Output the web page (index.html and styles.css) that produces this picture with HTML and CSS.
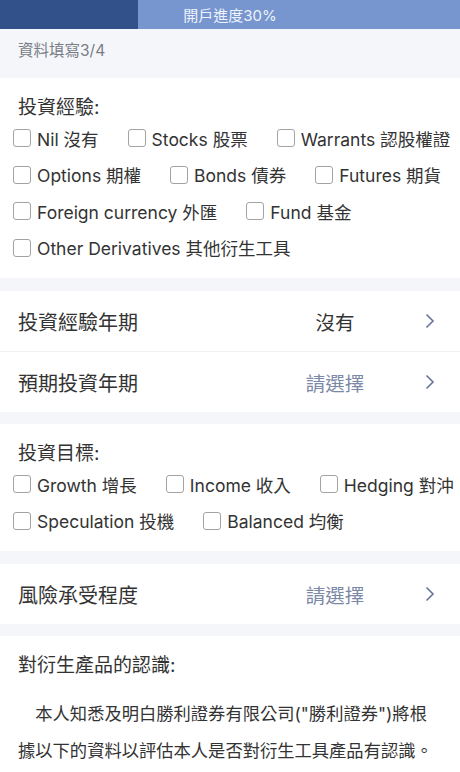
FILE: index.html
```html
<!DOCTYPE html>
<html lang="zh-Hant">
<head>
  <meta charset="UTF-8">
  <title>資料填寫</title>
  <link rel="stylesheet" href="styles.css">
</head>
<body>
  <div class="progress">
    <div class="progress-fill"></div>
    <span class="progress-text">開戶進度30%</span>
  </div>

  <div class="step">資料填寫3/4</div>

  <div class="section">
    <h3>投資經驗:</h3>
    <div class="check-row">
      <label class="check"><span class="box"></span>Nil 沒有</label>
      <label class="check"><span class="box"></span>Stocks 股票</label>
      <label class="check"><span class="box"></span>Warrants 認股權證</label>
    </div>
    <div class="check-row">
      <label class="check"><span class="box"></span>Options 期權</label>
      <label class="check"><span class="box"></span>Bonds 債券</label>
      <label class="check"><span class="box"></span>Futures 期貨</label>
    </div>
    <div class="check-row">
      <label class="check"><span class="box"></span>Foreign currency 外匯</label>
      <label class="check"><span class="box"></span>Fund 基金</label>
    </div>
    <div class="check-row">
      <label class="check"><span class="box"></span>Other Derivatives 其他衍生工具</label>
    </div>
  </div>

  <div class="list">
    <div class="item">
      <span class="item-label">投資經驗年期</span>
      <span class="item-value filled">沒有</span>
      <svg class="arrow" width="10" height="16" viewBox="0 0 10 16"><path d="M1.5 1.5 L8 8 L1.5 14.5" fill="none" stroke="#65749a" stroke-width="1.6"/></svg>
    </div>
    <div class="item">
      <span class="item-label">預期投資年期</span>
      <span class="item-value">請選擇</span>
      <svg class="arrow" width="10" height="16" viewBox="0 0 10 16"><path d="M1.5 1.5 L8 8 L1.5 14.5" fill="none" stroke="#65749a" stroke-width="1.6"/></svg>
    </div>
  </div>

  <div class="section">
    <h3>投資目標:</h3>
    <div class="check-row">
      <label class="check"><span class="box"></span>Growth 增長</label>
      <label class="check"><span class="box"></span>Income 收入</label>
      <label class="check"><span class="box"></span>Hedging 對沖</label>
    </div>
    <div class="check-row">
      <label class="check"><span class="box"></span>Speculation 投機</label>
      <label class="check"><span class="box"></span>Balanced 均衡</label>
    </div>
  </div>

  <div class="list">
    <div class="item">
      <span class="item-label">風險承受程度</span>
      <span class="item-value">請選擇</span>
      <svg class="arrow" width="10" height="16" viewBox="0 0 10 16"><path d="M1.5 1.5 L8 8 L1.5 14.5" fill="none" stroke="#65749a" stroke-width="1.6"/></svg>
    </div>
  </div>

  <div class="section last">
    <h3>對衍生產品的認識:</h3>
    <p class="note">本人知悉及明白勝利證券有限公司("勝利證券")將根據以下的資料以評估本人是否對衍生工具產品有認識。</p>
  </div>
</body>
</html>
```

FILE: styles.css
```css
body {
  margin: 0;
  background-color: #f5f6fa;
  font-family: Inter, "Noto Sans CJK TC", sans-serif;
  color: #333;
}

.progress {
  position: relative;
  height: 29px;
  background-color: #7796cf;
  display: flex;
  align-items: center;
  justify-content: center;
}

.progress-fill {
  position: absolute;
  left: 0;
  top: 0;
  bottom: 0;
  width: 30%;
  background-color: #32518b;
}

.progress-text {
  position: relative;
  color: #eef2fa;
  font-size: 15px;
}

.step {
  padding: 12px 18px 17px;
  line-height: 20px;
  font-size: 15.5px;
  color: #787d87;
}

.section {
  background-color: white;
  padding: 18px 0 12px;
  margin-bottom: 13px;
}

.section h3 {
  margin: 0;
  padding-left: 18px;
  font-size: 19px;
  font-weight: normal;
  line-height: 24px;
}

.check-row {
  display: flex;
  gap: 29px;
  padding-left: 13px;
  height: 36.5px;
  align-items: center;
  white-space: nowrap;
}

.check {
  display: flex;
  align-items: center;
  font-size: 17.5px;
}

.box {
  width: 16px;
  height: 16px;
  border: 1px solid #a3a3a3;
  border-radius: 3px;
  margin-right: 6px;
}

.list {
  background-color: white;
  margin-bottom: 12px;
}

.item {
  display: flex;
  align-items: center;
  height: 60px;
  padding: 0 25px 0 18px;
}

.item + .item {
  border-top: 1px solid #f0f1f4;
}

.item-label {
  flex: 1;
  font-size: 20px;
}

.item-value {
  width: 100px;
  margin-right: 40px;
  text-align: center;
  font-size: 19.5px;
  color: #7b88a6;
}

.item-value.filled {
  color: #333;
}

.section.last {
  margin-bottom: 0;
  padding-bottom: 20px;
}

.note {
  margin: 17px 26px 0 18px;
  font-size: 17.3px;
  line-height: 37px;
  text-indent: 1em;
}
```
